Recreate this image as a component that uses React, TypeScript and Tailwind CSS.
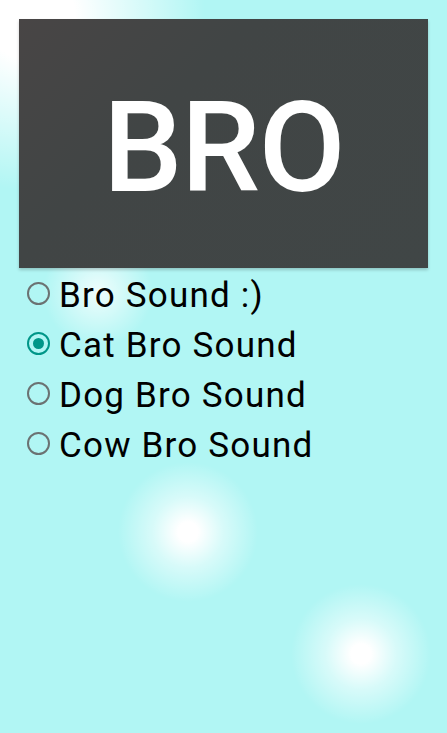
import { useState } from "react";

const sounds = ["Bro Sound :)", "Cat Bro Sound", "Dog Bro Sound", "Cow Bro Sound"];

function Radio({ checked }: { checked: boolean }) {
  return (
    <span
      className={
        "flex h-[23px] w-[23px] shrink-0 items-center justify-center rounded-full border-[2.5px] " +
        (checked ? "border-[#009688]" : "border-[#6b7272]")
      }
    >
      {checked && <span className="h-[11px] w-[11px] rounded-full bg-[#009688]" />}
    </span>
  );
}

export default function App() {
  const [selected, setSelected] = useState(1);

  return (
    <div className="min-h-[733px] w-full bg-[#b1f6f4] bg-[radial-gradient(circle_at_188px_532px,#ffffff_0px,#ffffff_10px,rgba(255,255,255,0.5)_35px,rgba(255,255,255,0)_70px),radial-gradient(circle_at_361px_654px,#ffffff_0px,#ffffff_10px,rgba(255,255,255,0.5)_35px,rgba(255,255,255,0)_70px),radial-gradient(circle_at_30px_15px,#ffffff_0px,#ffffff_45px,rgba(255,255,255,0)_175px),radial-gradient(circle_at_98px_292px,rgba(255,255,255,0.8)_0px,rgba(255,255,255,0)_55px)] pt-[19px] font-['Roboto',sans-serif]">
      <div className="mx-[19px] flex h-[249px] items-center justify-center bg-[#404545] bg-[linear-gradient(135deg,#484545_0%,#414545_35%,#404646_100%)] shadow-[0_2px_3px_rgba(0,0,0,0.2)]">
        <span className="mt-[8px] text-[126px] font-medium leading-none tracking-[-1.5px] text-white">BRO</span>
      </div>
      <div className="flex flex-col px-[27px]">
        {sounds.map((s, i) => (
          <button
            key={s}
            onClick={() => setSelected(i)}
            className="flex h-[50px] items-center gap-[9px] text-left"
          >
            <Radio checked={selected === i} />
            <span className="pt-[5px] text-[35px] leading-[50px] tracking-[1.2px] text-black">{s}</span>
          </button>
        ))}
      </div>
    </div>
  );
}
